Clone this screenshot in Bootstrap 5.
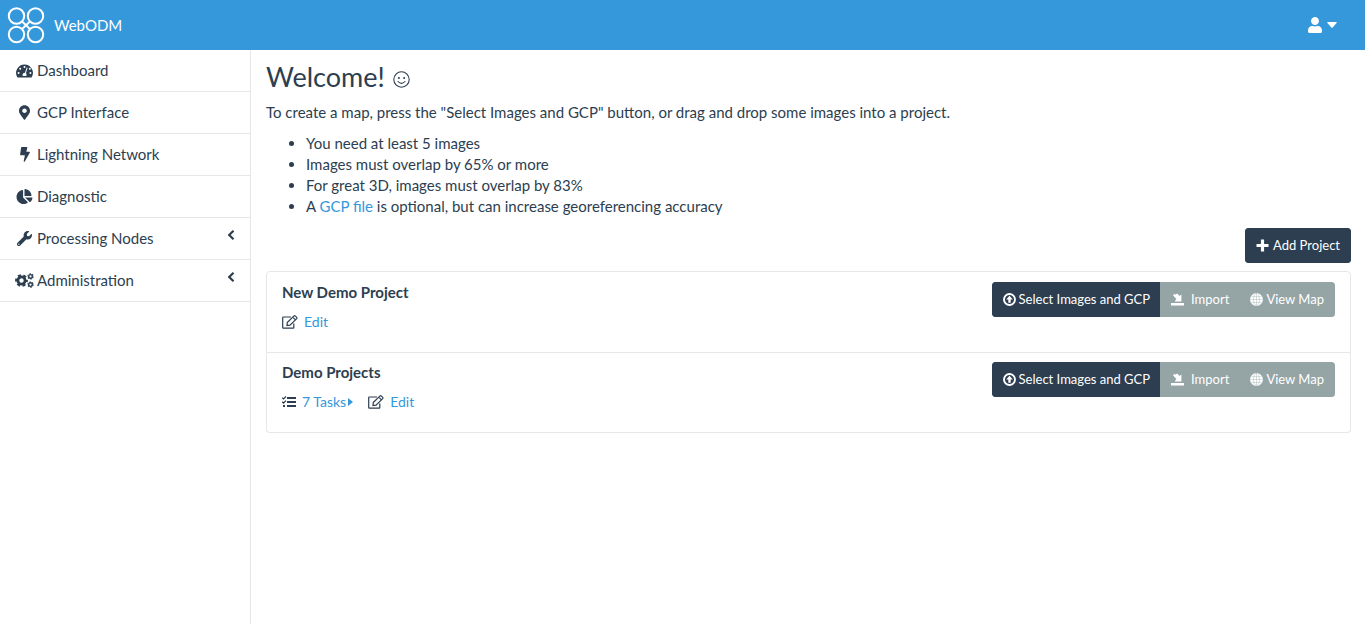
<!DOCTYPE html>
<html lang="en">
<head>
<meta charset="utf-8">
<meta name="viewport" content="width=device-width, initial-scale=1">
<title>WebODM - Dashboard</title>
<link rel="stylesheet" href="https://cdn.jsdelivr.net/npm/bootstrap@5.3.0/dist/css/bootstrap.min.css">
<style>
  :root { --ink: #2c3e50; --sky: #3498db; --line: #e7e7e7; --muted: #95a5a6; }
  body { font-family: Lato, sans-serif; font-size: 15px; line-height: 21px; color: var(--ink); background: #fff; }
  a { color: var(--sky); text-decoration: none; }
  svg { display: block; flex: none; fill: currentColor; }
  .topbar { background: var(--sky); height: 50px; padding: 0 28px 0 7px; }
  .topbar .navbar-brand { color: #fff; font-size: 15px; line-height: 21px; gap: 9px; }
  .user-menu { color: #fff; gap: 5px; background: none; }
  .shell { min-height: calc(100vh - 50px); }
  .sidebar { width: 251px; border-right: 1px solid var(--line); }
  .sidebar a { color: var(--ink); padding: 10px 15px; border-bottom: 1px solid var(--line); gap: 3px; }
  .sidebar .ico { width: 19px; display: flex; justify-content: center; }
  .sidebar .arrow { margin: 0 0 7px auto; }
  .main-pane { padding: 10px 14px 15px 15px; min-width: 0; }
  h1 { font-size: 27px; line-height: 34px; font-weight: 400; gap: 8px; margin-bottom: 8px; }
  .intro { margin-bottom: 10px; }
  .tips { padding-left: 40px; margin-bottom: 11px; }
  .btn { --bs-btn-font-size: 13px; --bs-btn-line-height: 19px; --bs-btn-padding-y: 7px; --bs-btn-padding-x: 10px; --bs-btn-border-radius: 3px; --bs-btn-color: #fff; --bs-btn-hover-color: #fff; }
  .btn { display: inline-flex; align-items: center; gap: 4px; }
  .btn-group .btn { gap: 3px; }
  .btn-ink { --bs-btn-bg: var(--ink); --bs-btn-border-color: var(--ink); --bs-btn-hover-bg: #1a242f; }
  .btn-ash { --bs-btn-bg: var(--muted); --bs-btn-border-color: var(--muted); --bs-btn-hover-bg: #7f8c8d; }
  .projects { --bs-list-group-border-color: var(--line); --bs-list-group-color: var(--ink); --bs-list-group-border-radius: 4px; margin-top: 8px; }
  .projects .list-group-item { padding: 10px 15px 20px; }
  .projects .list-group-item + .list-group-item { padding-top: 9px; }
  .projects h2 { font-size: 15px; line-height: 21px; font-weight: 700; margin-bottom: 9px; }
  .actions { font-size: 14px; line-height: 20px; gap: 15px; }
  .actions span { display: flex; align-items: center; gap: 6px; }
  .actions a { display: flex; align-items: center; gap: 2px; }
</style>
</head>
<body>
<nav class="navbar topbar justify-content-between flex-nowrap">
  <a class="navbar-brand d-flex align-items-center p-0 m-0" href="#">
    <svg width="38" height="38" viewBox="0 0 38 38"><g fill="none" stroke="#fff" stroke-width="2">
      <circle cx="9.500" cy="10" r="7.700"/><circle cx="28.500" cy="10" r="7.700"/><circle cx="9.500" cy="28.500" r="7.700"/><circle cx="28.500" cy="28.500" r="7.700"/>
      <path d="M14.800 15.200l8.400 8M23.200 15.200l-8.400 8"/></g>
    </svg>WebODM</a>
  <button class="user-menu border-0 p-0 d-flex align-items-center" type="button" aria-label="User menu">
    <svg width="14" height="16" viewBox="0 0 448 512"><path d="M224 256c70.700 0 128-57.300 128-128S294.700 0 224 0 96 57.300 96 128s57.300 128 128 128zm89.600 32h-16.700c-22.200 10.200-46.900 16-72.900 16s-50.600-5.800-72.900-16h-16.700C60.200 288 0 348.200 0 422.400V464c0 26.500 21.500 48 48 48h352c26.500 0 48-21.500 48-48v-41.600c0-74.200-60.200-134.400-134.400-134.400z"/></svg>
    <svg width="10" height="6" viewBox="0 0 10 6"><path d="M.8 0h8.400q.8.200.4.900L5.600 5.400q-.6.600-1.200 0L.4.900Q0 .2.800 0z"/></svg>
  </button>
</nav>
<div class="d-flex shell">
  <nav class="sidebar d-flex flex-column flex-shrink-0">
    <a class="d-flex align-items-center" href="#"><span class="ico"><svg width="17" height="14" viewBox="0 0 17 14"><path fill-rule="evenodd" d="M8.500.5A8.400 8.400 0 0 0 1.300 13.200q.3.300.7.300h13q.4 0 .7-.3A8.400 8.400 0 0 0 8.500.5zM8.500 2a1 1 0 1 1 0 2 1 1 0 0 1 0-2zM4.200 3.700a1 1 0 1 1 0 2 1 1 0 0 1 0-2zM2.600 8a1 1 0 1 1 0 2 1 1 0 0 1 0-2zM14.400 8a1 1 0 1 1 0 2 1 1 0 0 1 0-2zM13.500 3.900a1 1 0 1 1 0 1.900 1 1 0 0 1 0-1.900zM10.700 3.500l.9.300-1.700 5.400q.9.700.6 2l-.4.800H6.900q-.9-1.700.4-2.800.7-.5 1.600-.3z"/></svg></span>Dashboard</a>
    <a class="d-flex align-items-center" href="#"><span class="ico"><svg width="11" height="15" viewBox="0 0 384 512"><path d="M172.268 501.670C26.970 291.031 0 269.413 0 192 0 85.961 85.961 0 192 0s192 85.961 192 192c0 77.413-26.970 99.031-172.268 309.670-9.535 13.774-29.930 13.773-39.464 0zM192 272c44.183 0 80-35.817 80-80s-35.817-80-80-80-80 35.817-80 80 35.817 80 80 80z"/></svg></span>GCP Interface</a>
    <a class="d-flex align-items-center" href="#"><span class="ico"><svg width="10" height="15" viewBox="0 0 10 15"><path d="M1.700 0h5.100q.7.100.5.800L6.300 4.700h3.100q.7.200.5.800L4.800 14.500q-.8.800-1.100-.2L4.900 8.300H.7Q0 8.200.1 7.600L1.100.6q.1-.5.600-.6z"/></svg></span>Lightning Network</a>
    <a class="d-flex align-items-center" href="#"><span class="ico"><svg width="17" height="15" viewBox="0 0 544 512"><path d="M527.790 288H290.500l158.030 158.030c6.040 6.040 15.980 6.530 22.190.68 38.700-36.460 65.320-85.610 73.130-140.860 1.340-9.460-6.510-17.850-16.060-17.850zm-15.830-64.800C503.720 103.740 408.260 8.280 288.800.04 279.680-.59 272 7.100 272 16.240V240h223.770c9.140 0 16.820-7.680 16.190-16.800zM224 288V50.710c0-9.550-8.390-17.400-17.840-16.060C86.990 51.490-4.100 155.600.14 280.370 4.500 408.510 114.830 513.590 243.030 511.980c50.400-.63 96.970-16.870 135.260-44.030 7.900-5.600 8.420-17.230 1.570-24.080L224 288z"/></svg></span>Diagnostic</a>
    <a class="d-flex align-items-center" href="#"><span class="ico"><svg width="15" height="15" viewBox="0 0 512 512"><path d="M507.730 109.100c-2.240-9.030-13.540-12.090-20.120-5.510l-74.360 74.360-67.880-11.310-11.310-67.880 74.360-74.360c6.620-6.620 3.430-17.900-5.660-20.160-47.380-11.740-99.550.91-136.580 37.930-39.640 39.640-50.550 97.100-34.050 147.200L18.740 402.760c-24.990 24.990-24.990 65.510 0 90.500 24.990 24.990 65.510 24.990 90.500 0l213.210-213.210c50.120 16.710 107.470 5.680 147.370-34.220 37.070-37.070 49.700-89.320 37.910-136.730zM64 472c-13.250 0-24-10.750-24-24 0-13.260 10.750-24 24-24s24 10.740 24 24c0 13.250-10.750 24-24 24z"/></svg></span>Processing Nodes
      <svg class="arrow" width="8" height="10" viewBox="0 0 8 10"><path d="M6.500.8L2.200 5l4.300 4.200" fill="none" stroke="currentColor" stroke-width="2.200"/></svg></a>
    <a class="d-flex align-items-center" href="#"><span class="ico"><svg width="19" height="15" viewBox="0 0 19 15" stroke="currentColor"><g fill="none"><circle cx="6.500" cy="7.500" r="3.600" stroke-width="2.800"/><circle cx="6.500" cy="7.500" r="5.300" stroke-width="2.200" stroke-dasharray="3 2.550" stroke-dashoffset="1.500"/><circle cx="15.500" cy="3.400" r="1.800" stroke-width="1.400"/><circle cx="15.500" cy="3.400" r="2.600" stroke-width="1.200" stroke-dasharray="1.500 1.220"/><circle cx="15.500" cy="11.600" r="1.800" stroke-width="1.400"/><circle cx="15.500" cy="11.600" r="2.600" stroke-width="1.200" stroke-dasharray="1.500 1.220"/></g></svg></span>Administration
      <svg class="arrow" width="8" height="10" viewBox="0 0 8 10"><path d="M6.500.8L2.200 5l4.300 4.200" fill="none" stroke="currentColor" stroke-width="2.200"/></svg></a>
  </nav>
  <main class="main-pane flex-grow-1">
    <h1 class="d-flex align-items-center">Welcome!
      <svg class="mt-1" width="17" height="17" viewBox="0 0 17 17"><circle cx="8.500" cy="8.500" r="7.700" fill="none" stroke="currentColor" stroke-width="1.100"/><circle cx="5.900" cy="6.900" r="1"/><circle cx="11.100" cy="6.900" r="1"/><path d="M5 10.500q3.500 3.800 7 0" fill="none" stroke="currentColor" stroke-width="1.100" stroke-linecap="round"/></svg>
    </h1>
    <p class="intro">To create a map, press the "Select Images and GCP" button, or drag and drop some images into a project.</p>
    <ul class="tips">
      <li>You need at least 5 images</li>
      <li>Images must overlap by 65% or more</li>
      <li>For great 3D, images must overlap by 83%</li>
      <li>A <a href="#">GCP file</a> is optional, but can increase georeferencing accuracy</li>
    </ul>
    <div class="d-flex justify-content-end">
      <button class="btn btn-ink" type="button"><svg width="13" height="13" viewBox="0 0 13 13"><path d="M4.900.5h3.200v4.400h4.400v3.200H8.100v4.400H4.900V8.100H.5V4.900h4.400z"/></svg>Add Project</button>
    </div>
    <ul class="list-group projects">
      <li class="list-group-item d-flex justify-content-between align-items-start">
        <div>
          <h2>New Demo Project</h2>
          <div class="d-flex actions">
            <span><svg width="16" height="14" viewBox="0 0 16 14"><g fill="none" stroke="currentColor" stroke-width="1.200"><path d="M9 2H1.300q-.6 0-.6.600v10q0 .6.600.6h9.900q.6 0 .6-.6V8.500"/><path d="M5.300 7.500L12 .9q.6-.4 1.200 0l1.500 1.500q.5.600 0 1.200L8 10.200l-3 .4zM10.800 2.100l2.700 2.700"/></g></svg><a href="#">Edit</a></span>
          </div>
        </div>
        <div class="btn-group">
          <button class="btn btn-ink" type="button"><svg width="13" height="13" viewBox="0 0 13 13"><circle cx="6.500" cy="6.500" r="5.500" fill="none" stroke="currentColor" stroke-width="1.900"/><path d="M6.500 2.800L9.800 6.500H7.700v3.200H5.300V6.500H3.200z"/></svg>Select Images and GCP</button>
          <button class="btn btn-ash" type="button"><svg class="me-1" width="13" height="13" viewBox="0 0 13 13"><path d="M0 10h13v2.500H0zM2 2.200L3.500.8l1 1L6 .5l2.700 2.600L10.400 1.200v7.200H3.600L5.400 6z"/></svg>Import</button>
          <button class="btn btn-ash" type="button"><svg width="13" height="13" viewBox="0 0 14 14"><circle cx="7" cy="7" r="6.900"/><g fill="none" stroke="#95a5a6" stroke-width=".4"><ellipse cx="7" cy="7" rx="3.300" ry="6.500"/><path d="M7 .5v13M.5 7h13M1.500 3.900h11M1.500 10.100h11"/></g></svg>View Map</button>
        </div>
      </li>
      <li class="list-group-item d-flex justify-content-between align-items-start">
        <div>
          <h2>Demo Projects</h2>
          <div class="d-flex actions">
            <span><svg width="14" height="12" viewBox="0 0 14 12"><path d="M5 1h9v2H5zM5 5h9v2H5zM5 9h9v2H5zM1 9h2v2H1z"/><path d="M.3 1.700l1.200 1.200L4 .5M.3 5.800L1.500 7 4 4.600" fill="none" stroke="currentColor" stroke-width="1.300"/></svg><a href="#">7 Tasks<svg width="5" height="8" viewBox="0 0 5 8"><path d="M0 0l5 4-5 4z"/></svg></a></span>
            <span><svg width="16" height="14" viewBox="0 0 16 14"><g fill="none" stroke="currentColor" stroke-width="1.200"><path d="M9 2H1.300q-.6 0-.6.600v10q0 .6.600.6h9.900q.6 0 .6-.6V8.500"/><path d="M5.300 7.500L12 .9q.6-.4 1.200 0l1.500 1.500q.5.600 0 1.200L8 10.200l-3 .4zM10.800 2.100l2.700 2.700"/></g></svg><a href="#">Edit</a></span>
          </div>
        </div>
        <div class="btn-group">
          <button class="btn btn-ink" type="button"><svg width="13" height="13" viewBox="0 0 13 13"><circle cx="6.500" cy="6.500" r="5.500" fill="none" stroke="currentColor" stroke-width="1.900"/><path d="M6.500 2.800L9.800 6.500H7.700v3.200H5.300V6.500H3.200z"/></svg>Select Images and GCP</button>
          <button class="btn btn-ash" type="button"><svg class="me-1" width="13" height="13" viewBox="0 0 13 13"><path d="M0 10h13v2.500H0zM2 2.200L3.500.8l1 1L6 .5l2.700 2.600L10.400 1.200v7.200H3.600L5.400 6z"/></svg>Import</button>
          <button class="btn btn-ash" type="button"><svg width="13" height="13" viewBox="0 0 14 14"><circle cx="7" cy="7" r="6.900"/><g fill="none" stroke="#95a5a6" stroke-width=".4"><ellipse cx="7" cy="7" rx="3.300" ry="6.500"/><path d="M7 .5v13M.5 7h13M1.500 3.900h11M1.500 10.100h11"/></g></svg>View Map</button>
        </div>
      </li>
    </ul>
  </main>
</div>
<script src="https://cdn.jsdelivr.net/npm/bootstrap@5.3.0/dist/js/bootstrap.bundle.min.js"></script>
</body>
</html>
